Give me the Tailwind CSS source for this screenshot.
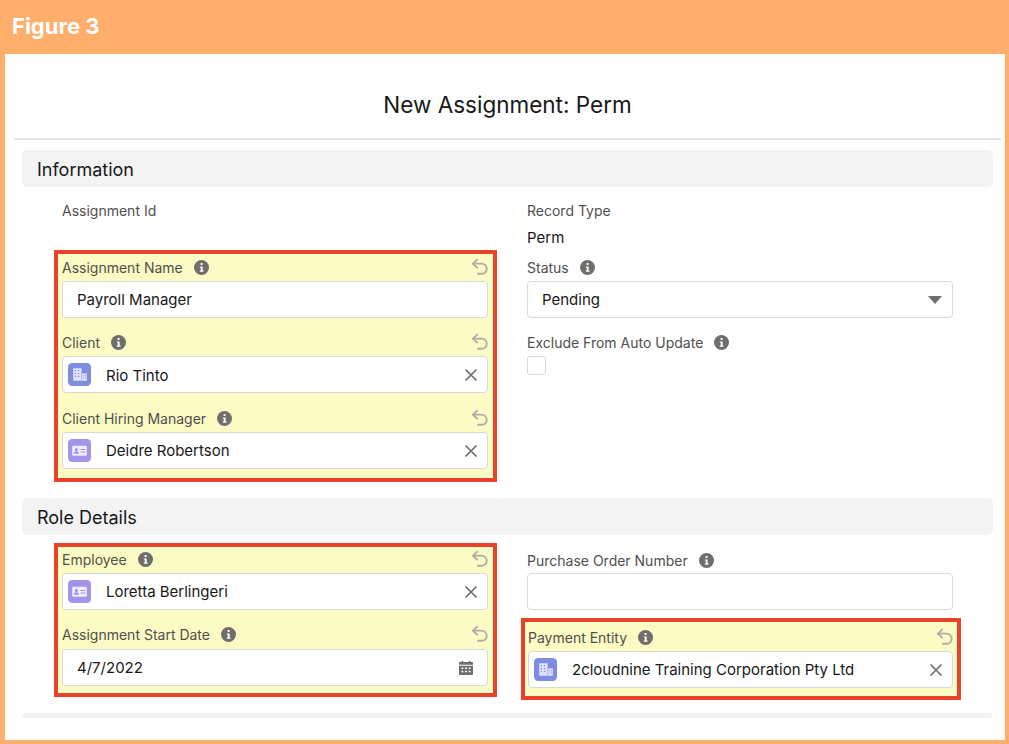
<!DOCTYPE html>
<html>
<head>
<meta charset="utf-8">
<title>New Assignment: Perm</title>
<script src="https://cdn.jsdelivr.net/npm/@tailwindcss/browser@4"></script>
</head>
<body class="m-0 overflow-hidden">
<svg class="hidden">
  <symbol id="info" viewBox="0 0 16 16">
    <circle cx="8" cy="8" r="8" fill="#706e6b"/>
    <rect x="7" y="3.2" width="2.2" height="2.2" rx=".5" fill="#fff"/>
    <path d="M6.2 6.8h3v4.4h1v1.2H6.2v-1.2h1V8h-1z" fill="#fff"/>
  </symbol>
  <symbol id="undo" viewBox="0 0 16 16">
    <path d="M6 1 1.600 5 6 9M2 5h7.500a4.500 4.500 0 0 1 0 9H5.500" fill="none" stroke="#aeaca9" stroke-width="1.600"/>
  </symbol>
  <symbol id="close" viewBox="0 0 14 14">
    <path d="M1.5 1.5l11 11M12.5 1.5l-11 11" fill="none" stroke="#706e6b" stroke-width="1.7"/>
  </symbol>
  <symbol id="building" viewBox="0 0 22 22">
    <rect width="22" height="22" rx="4" fill="#7f8de1"/>
    <path d="M5 5h8v12H5z" fill="#dfe3f9"/>
    <path d="M13.500 10H18v7h-4.500z" fill="#dfe3f9"/>
    <path d="M6.500 6.800h1.200V8H6.500zm3 0h1.200V8H9.500zm-3 2.700h1.200v1.200H6.500zm3 0h1.200v1.200H9.500zm-3 2.700h1.200v1.200H6.500zm3 0h1.200v1.200H9.500zm5.200-.4h.9v.9h-.9zm1.700 0h.9v.9h-.9zm-1.700 2h.9v.9h-.9zm1.700 0h.9v.9h-.9z" fill="#7f8de1"/>
  </symbol>
  <symbol id="contact" viewBox="0 0 22 22">
    <rect width="22" height="22" rx="4" fill="#a094ed"/>
    <rect x="4" y="6.500" width="14" height="9.500" rx="1.200" fill="#efecfd"/>
    <circle cx="8" cy="10" r="1.500" fill="#a094ed"/>
    <path d="M5.500 14c0-1.500 1.200-2.200 2.500-2.200s2.500.7 2.500 2.200zM12 9.500h4.500v1H12zm0 2.500h4.500v1H12z" fill="#a094ed"/>
  </symbol>
  <symbol id="calendar" viewBox="0 0 16 16">
    <path d="M1 3.200c0-.6.500-1.100 1.100-1.100h1.400V1h1.600v1.100h5.800V1h1.600v1.100h1.400c.6 0 1.100.5 1.100 1.100v1.600H1zM1 5.800h14v8.100c0 .6-.5 1.100-1.100 1.100H2.100C1.500 15 1 14.500 1 13.900z" fill="#706e6b"/>
    <path d="M3.500 7.500h1.800v1.500H3.500zm3.600 0h1.800v1.500H7.100zm3.600 0h1.800v1.500h-1.800zM3.500 10.800h1.800v1.500H3.500zm3.600 0h1.800v1.500H7.100zm3.600 0h1.800v1.500h-1.800z" fill="#fff"/>
  </symbol>
</svg>

<div class="w-[1009px] h-[744px] bg-[#ffae6b] pl-[5px] pr-[4px] pb-[4px] flex flex-col font-['Inter',sans-serif] text-[#181818]">
  <div class="h-[54px] shrink-0 flex items-center pl-[7px] pb-[2px] text-white text-[22px] font-bold font-['Inter',sans-serif]">Figure 3</div>

  <div class="flex-1 bg-white pl-[9px] pr-[4px] overflow-hidden">
    <h1 class="h-[86px] pt-[18px] flex items-center justify-center text-[22.5px] font-normal border-b-2 border-[#e5e5e5]">New Assignment: Perm</h1>

    <div class="pl-[8px] pt-[10px]">
      <div class="h-[37px] w-[971px] bg-[#f3f3f3] rounded-[5px] flex items-center pl-[15px] pt-[2px] text-[18px]">Information</div>

      <div class="grid grid-cols-[473px_426px] mt-[15px] pl-[32px]">
        <div>
          <div class="pl-[8px] h-[20px] pb-[4px] flex items-center text-[14px] text-[#514f4d]">Assignment Id</div>
          <div class="mt-[28px] w-[443px] border-[4px] border-[#e8432a] bg-[#fafcc4] pt-[4px] pb-[9px] pl-[4px] pr-[5px]">
            <div class="h-[20px] pb-[2px] flex items-center justify-between text-[14px] text-[#514f4d]"><span class="flex items-center gap-[11px]">Assignment Name <svg class="w-[15px] h-[15px]"><use href="#info"/></svg></span><svg class="w-[18px] h-[18px] -mr-[1px]"><use href="#undo"/></svg></div>
            <div class="mt-[3px] h-[37px] bg-white border border-[#d8d8d8] rounded-[4px] flex items-center pl-[14px] pt-[2px] text-[15px]">Payroll Manager</div>

            <div class="mt-[15px] h-[20px] pb-[2px] flex items-center justify-between text-[14px] text-[#514f4d]"><span class="flex items-center gap-[11px]">Client <svg class="w-[15px] h-[15px]"><use href="#info"/></svg></span><svg class="w-[18px] h-[18px] -mr-[1px]"><use href="#undo"/></svg></div>
            <div class="mt-[3px] h-[37px] bg-white border border-[#d8d8d8] rounded-[4px] flex items-center pl-[5px] pr-[9px] text-[15px]">
              <svg class="w-[23px] h-[23px] shrink-0"><use href="#building"/></svg><span class="ml-[15px] flex-1 pt-[4px]">Rio Tinto</span><svg class="w-[14px] h-[14px]"><use href="#close"/></svg>
            </div>

            <div class="mt-[16px] h-[20px] pb-[2px] flex items-center justify-between text-[14px] text-[#514f4d]"><span class="flex items-center gap-[11px]">Client Hiring Manager <svg class="w-[15px] h-[15px]"><use href="#info"/></svg></span><svg class="w-[18px] h-[18px] -mr-[1px]"><use href="#undo"/></svg></div>
            <div class="mt-[3px] h-[37px] bg-white border border-[#d8d8d8] rounded-[4px] flex items-center pl-[5px] pr-[9px] text-[15px]">
              <svg class="w-[23px] h-[23px] shrink-0"><use href="#contact"/></svg><span class="ml-[15px] flex-1 pt-[2px]">Deidre Robertson</span><svg class="w-[14px] h-[14px]"><use href="#close"/></svg>
            </div>
          </div>
        </div>

        <div>
          <div class="h-[20px] pb-[4px] flex items-center text-[14px] text-[#514f4d]">Record Type</div>
          <div class="h-[27px] mt-[3px] flex items-center text-[15px]">Perm</div>
          <div class="mt-[6px] h-[20px] pb-[2px] flex items-center gap-[11px] text-[14px] text-[#514f4d]">Status <svg class="w-[15px] h-[15px]"><use href="#info"/></svg></div>
          <div class="mt-[3px] h-[37px] bg-white border border-[#d8d8d8] rounded-[4px] flex items-center justify-between pl-[14px] pr-[10px] text-[15px]"><span class="pt-[2px]">Pending</span><svg class="w-[14px] h-[8px]" viewBox="0 0 14 8"><path d="M0 0h14L7 8z" fill="#706e6b"/></svg></div>
          <div class="mt-[15px] h-[20px] pb-[2px] flex items-center gap-[11px] text-[14px] text-[#514f4d]">Exclude From Auto Update <svg class="w-[15px] h-[15px]"><use href="#info"/></svg></div>
          <div class="mt-[3px] w-[19px] h-[19px] bg-white border border-[#d8d8d8] rounded-[3px]"></div>
        </div>
      </div>

      <div class="mt-[16px] h-[37px] w-[971px] bg-[#f3f3f3] rounded-[5px] flex items-center pl-[15px] pt-[2px] text-[18px]">Role Details</div>

      <div class="grid grid-cols-[473px_426px] mt-[8px] pl-[32px]">
        <div class="w-[443px] h-[154px] border-[4px] border-[#e8432a] bg-[#fafcc4] pt-[3px] pl-[4px] pr-[5px]">
          <div class="h-[20px] pb-[2px] flex items-center justify-between text-[14px] text-[#514f4d]"><span class="flex items-center gap-[11px]">Employee <svg class="w-[15px] h-[15px]"><use href="#info"/></svg></span><svg class="w-[18px] h-[18px] -mr-[1px]"><use href="#undo"/></svg></div>
          <div class="mt-[3px] h-[37px] bg-white border border-[#d8d8d8] rounded-[4px] flex items-center pl-[5px] pr-[9px] text-[15px]">
            <svg class="w-[23px] h-[23px] shrink-0"><use href="#contact"/></svg><span class="ml-[15px] flex-1 pt-[2px]">Loretta Berlingeri</span><svg class="w-[14px] h-[14px]"><use href="#close"/></svg>
          </div>
          <div class="mt-[16px] h-[20px] pb-[4px] flex items-center justify-between text-[14px] text-[#514f4d]"><span class="flex items-center gap-[11px]">Assignment Start Date <svg class="w-[15px] h-[15px]"><use href="#info"/></svg></span><svg class="w-[18px] h-[18px] -mr-[1px]"><use href="#undo"/></svg></div>
          <div class="mt-[3px] h-[37px] bg-white border border-[#d8d8d8] rounded-[4px] flex items-center justify-between pl-[14px] pr-[13px] text-[15px]"><span class="pt-[2px]">4/7/2022</span><svg class="w-[16px] h-[16px]"><use href="#calendar"/></svg></div>
        </div>

        <div>
          <div class="mt-[8px] h-[20px] pb-[2px] flex items-center gap-[11px] text-[14px] text-[#514f4d]">Purchase Order Number <svg class="w-[15px] h-[15px]"><use href="#info"/></svg></div>
          <div class="mt-[2px] h-[37px] bg-white border border-[#d8d8d8] rounded-[4px]"></div>
          <div class="mt-[8px] -ml-[6px] w-[440px] h-[82px] border-[4px] border-[#e8432a] bg-[#fafcc4] pt-[6px] pl-[3px] pr-[4px]">
            <div class="h-[20px] pb-[2px] flex items-center justify-between text-[14px] text-[#514f4d]"><span class="flex items-center gap-[11px]">Payment Entity <svg class="w-[15px] h-[15px]"><use href="#info"/></svg></span><svg class="w-[18px] h-[18px] -mr-[1px]"><use href="#undo"/></svg></div>
            <div class="mt-[3px] h-[37px] bg-white border border-[#d8d8d8] rounded-[4px] flex items-center pl-[5px] pr-[9px] text-[15px]">
              <svg class="w-[23px] h-[23px] shrink-0"><use href="#building"/></svg><span class="ml-[15px] flex-1 pt-[2px]">2cloudnine Training Corporation Pty Ltd</span><svg class="w-[14px] h-[14px]"><use href="#close"/></svg>
            </div>
          </div>
        </div>
      </div>

      <div class="mt-[13px] h-[5px] w-[971px] bg-[#f3f3f3] rounded-t-[5px]"></div>
    </div>
  </div>
</div>
</body>
</html>
